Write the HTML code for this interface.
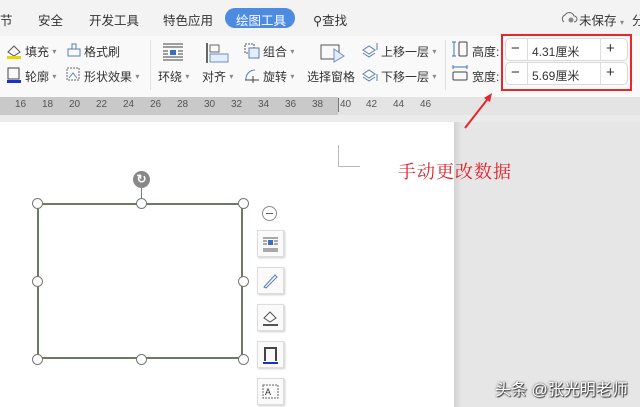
<!DOCTYPE html>
<html><head><meta charset="utf-8"><style>
*{margin:0;padding:0;box-sizing:border-box}
body{width:640px;height:407px;overflow:hidden;position:relative;background:#e6e6e6;font-family:"Liberation Sans","Noto Sans CJK SC",sans-serif;font-size:12px;color:#333}
.a{position:absolute;white-space:nowrap}
.tab{font-size:12.5px;top:10px}
.btn{font-size:12px}
.btn i{font-style:normal;font-size:8px;color:#888;vertical-align:2px}
.ic{position:absolute}
.hd{position:absolute;width:11px;height:11px;border:1px solid #777;border-radius:50%;background:#fff}
.sb{position:absolute;left:257px;width:27px;height:27px;background:#fafafa;border:1px solid #ddd;box-shadow:1px 1px 2px #ccc}
</style></head><body>
<div class="a" style="left:0;top:0;width:640px;height:36px;background:#f3f3f3"></div>
<div class="a" style="left:0;top:36px;width:640px;height:61px;background:#f9f9f9"></div>
<div class="a tab" style="left:0">节</div>
<div class="a tab" style="left:38px">安全</div>
<div class="a tab" style="left:89px">开发工具</div>
<div class="a tab" style="left:163px">特色应用</div>
<div class="a" style="left:225px;top:8px;width:70px;height:20px;border-radius:10px;background:#4d8be3"></div>
<div class="a tab" style="left:236px;color:#fff">绘图工具</div>
<div class="a tab" style="left:313px">&#9906;查找</div>
<svg class="ic" style="left:560px;top:10px" width="18" height="14"><path d="M4 12 A4 4 0 0 1 5 5 A5 5 0 0 1 14 6 A3 3 0 0 1 14 12" fill="none" stroke="#666"/><circle cx="11" cy="10" r="2.5" fill="#888"/></svg>
<div class="a tab" style="left:579px">未保存 <span style="font-size:8px;color:#888">▾</span></div>
<div class="a tab" style="left:632px">分</div>

<svg class="ic" style="left:5px;top:42px" width="18" height="18"><path d="M3 10 L9 4 L15 10 L9 14Z" fill="none" stroke="#555"/><rect x="2" y="14" width="14" height="3" fill="#e8d800"/></svg>
<div class="a btn" style="left:25px;top:43px">填充 <i>▾</i></div>
<svg class="ic" style="left:66px;top:42px" width="16" height="16"><rect x="2" y="7" width="12" height="7" fill="none" stroke="#5a7fb0"/><rect x="6" y="2" width="4" height="5" fill="none" stroke="#5a7fb0"/></svg>
<div class="a btn" style="left:84px;top:43px">格式刷</div>
<svg class="ic" style="left:5px;top:66px" width="18" height="18"><rect x="3" y="2" width="11" height="11" fill="none" stroke="#444"/><rect x="2" y="14" width="14" height="3" fill="#1a2fd0"/></svg>
<div class="a btn" style="left:25px;top:68px">轮廓 <i>▾</i></div>
<svg class="ic" style="left:65px;top:66px" width="17" height="17"><rect x="2" y="2" width="12" height="12" fill="none" stroke="#666" stroke-dasharray="2 1"/><path d="M4 12 L8 7 L12 12" stroke="#5a7fb0" fill="none"/></svg>
<div class="a btn" style="left:84px;top:68px">形状效果 <i>▾</i></div>
<div class="a" style="left:150px;top:40px;width:1px;height:50px;background:#e0e0e0"></div>
<svg class="ic" style="left:162px;top:42px" width="22" height="20"><path d="M1 2H21M1 5H21M1 15H21M1 18H21" stroke="#444"/><path d="M1 9H6M16 9H21M1 12H6M16 12H21" stroke="#444"/><rect x="8" y="8" width="6" height="5" fill="#3a6fc0"/></svg>
<div class="a btn" style="left:158px;top:68px">环绕 <i>▾</i></div>
<svg class="ic" style="left:205px;top:42px" width="24" height="22"><path d="M2 1V21" stroke="#666" stroke-width="2"/><rect x="5" y="3" width="9" height="7" fill="none" stroke="#666"/><rect x="5" y="12" width="18" height="8" fill="#e4eefa" stroke="#6a8fc8"/></svg>
<div class="a btn" style="left:202px;top:68px">对齐 <i>▾</i></div>
<svg class="ic" style="left:243px;top:42px" width="18" height="18"><rect x="2" y="2" width="9" height="9" fill="none" stroke="#555" stroke-dasharray="2 1"/><rect x="6" y="6" width="10" height="10" fill="#e4eefa" stroke="#5a7fb0"/></svg>
<div class="a btn" style="left:263px;top:43px">组合 <i>▾</i></div>
<svg class="ic" style="left:243px;top:66px" width="18" height="18"><path d="M3 14 A9 9 0 0 1 12 4" fill="none" stroke="#5a7fb0"/><path d="M2 14H16M10 10V17" stroke="#444"/></svg>
<div class="a btn" style="left:263px;top:68px">旋转 <i>▾</i></div>
<svg class="ic" style="left:320px;top:42px" width="26" height="22"><rect x="1" y="3" width="18" height="14" fill="none" stroke="#555"/><path d="M14 7 L24 14 L14 20Z" fill="#e4eefa" stroke="#6a8fc8"/></svg>
<div class="a btn" style="left:307px;top:68px">选择窗格</div>
<svg class="ic" style="left:361px;top:42px" width="18" height="17"><path d="M2 8 L8 4 L14 8 L8 12Z" fill="none" stroke="#5a7fb0"/><path d="M2 11 L8 15 L14 11" fill="none" stroke="#5a7fb0"/><path d="M16 1V8" stroke="#5a7fb0"/></svg>
<div class="a btn" style="left:381px;top:43px">上移一层 <i>▾</i></div>
<svg class="ic" style="left:361px;top:66px" width="18" height="17"><path d="M2 8 L8 4 L14 8 L8 12Z" fill="none" stroke="#5a7fb0"/><path d="M2 11 L8 15 L14 11" fill="none" stroke="#5a7fb0"/><path d="M16 8V15" stroke="#5a7fb0"/></svg>
<div class="a btn" style="left:381px;top:68px">下移一层 <i>▾</i></div>
<div class="a" style="left:445px;top:40px;width:1px;height:50px;background:#e0e0e0"></div>
<svg class="ic" style="left:451px;top:40px" width="18" height="18"><path d="M3 2V16M1 2H5M1 16H5" stroke="#3a6fc0"/><rect x="8" y="2" width="8" height="14" rx="1" fill="none" stroke="#444"/></svg>
<div class="a btn" style="left:472px;top:43px">高度:</div>
<svg class="ic" style="left:451px;top:64px" width="18" height="18"><path d="M2 3H16M2 1V5M16 1V5" stroke="#3a6fc0"/><rect x="2" y="8" width="14" height="8" rx="1" fill="none" stroke="#444"/></svg>
<div class="a btn" style="left:472px;top:68px">宽度:</div>

<div class="a" style="left:505px;top:38px;width:123px;height:23px;border:1px solid #d8d8d8;border-radius:5px;background:#fff"></div>
<div class="a" style="left:527px;top:38px;width:1px;height:23px;background:#ddd"></div>
<div class="a" style="left:600px;top:38px;width:1px;height:23px;background:#ddd"></div>
<div class="a" style="left:511px;top:40px;font-size:15px">−</div>
<div class="a" style="left:532px;top:43px">4.31厘米</div>
<div class="a" style="left:606px;top:40px;font-size:15px">+</div>
<div class="a" style="left:505px;top:62px;width:123px;height:23px;border:1px solid #d8d8d8;border-radius:5px;background:#fff"></div>
<div class="a" style="left:527px;top:62px;width:1px;height:23px;background:#ddd"></div>
<div class="a" style="left:600px;top:62px;width:1px;height:23px;background:#ddd"></div>
<div class="a" style="left:511px;top:64px;font-size:15px">−</div>
<div class="a" style="left:532px;top:67px">5.69厘米</div>
<div class="a" style="left:606px;top:64px;font-size:15px">+</div>
<div class="a" style="left:501px;top:34px;width:131px;height:57px;border:2px solid #e8262c"></div>

<div class="a" style="left:0;top:97px;width:640px;height:18px;background:#e4e4e4"></div>
<div class="a" style="left:0;top:97px;width:338px;height:18px;background:#c9c9c9"></div>
<div class="a" style="left:0;top:99px;font-size:10px;color:#555;width:640px;height:14px">
<span class="a" style="left:15px">16</span><span class="a" style="left:42px">18</span><span class="a" style="left:69px">20</span><span class="a" style="left:96px">22</span><span class="a" style="left:123px">24</span><span class="a" style="left:150px">26</span><span class="a" style="left:177px">28</span><span class="a" style="left:204px">30</span><span class="a" style="left:231px">32</span><span class="a" style="left:258px">34</span><span class="a" style="left:285px">36</span><span class="a" style="left:312px">38</span><span class="a" style="left:340px">40</span><span class="a" style="left:366px">42</span><span class="a" style="left:393px">44</span><span class="a" style="left:420px">46</span></div>
<div class="a" style="left:338px;top:98px;width:1px;height:14px;background:#777"></div>
<div class="a" style="left:0;top:115px;width:640px;height:7px;background:#ebebeb"></div>

<div class="a" style="left:0;top:122px;width:454px;height:285px;background:#fff"></div>
<div class="a" style="left:454px;top:122px;width:8px;height:285px;background:linear-gradient(to right,#d2d2d2,#e6e6e6)"></div>
<div class="a" style="left:338px;top:145px;width:22px;height:22px;border-left:1px solid #bbb;border-bottom:1px solid #bbb"></div>

<div class="a" style="left:37px;top:203px;width:206px;height:156px;border:2px solid #6b7a60"></div>
<div class="a" style="left:141px;top:186px;width:1px;height:17px;background:#777"></div>
<div class="a" style="left:133px;top:171px;width:17px;height:17px;border-radius:50%;background:#888;color:#fff;font-size:12px;line-height:17px;text-align:center;font-weight:bold">↻</div>
<div class="hd" style="left:32px;top:198px"></div><div class="hd" style="left:136px;top:198px"></div><div class="hd" style="left:238px;top:198px"></div>
<div class="hd" style="left:32px;top:276px"></div><div class="hd" style="left:238px;top:276px"></div>
<div class="hd" style="left:32px;top:354px"></div><div class="hd" style="left:136px;top:354px"></div><div class="hd" style="left:238px;top:354px"></div>
<div class="a" style="left:262px;top:206px;width:15px;height:15px;border:1px solid #888;border-radius:50%;background:#fff"></div>
<div class="a" style="left:266px;top:213px;width:7px;height:1px;background:#666"></div>
<div class="sb" style="top:230px"><svg width="25" height="25"><path d="M5 7H20M5 18H20M5 20H20M5 10H9M16 10H20M5 13H9M16 13H20" stroke="#555"/><rect x="10" y="9" width="5" height="5" fill="#3a6fc0"/></svg></div>
<div class="sb" style="top:267px"><svg width="25" height="25"><path d="M6 19 L17 7 L19 9 L8 20Z" fill="none" stroke="#5a7fb0"/></svg></div>
<div class="sb" style="top:304px"><svg width="25" height="25"><path d="M6 13 L12 7 L18 13 L12 17Z" fill="none" stroke="#555"/><path d="M5 20H20" stroke="#555" stroke-width="2"/></svg></div>
<div class="sb" style="top:341px"><svg width="25" height="25"><path d="M7 19V6H18V19" fill="none" stroke="#444" stroke-width="2"/><path d="M5 21H20" stroke="#1a2fd0" stroke-width="2"/></svg></div>
<div class="sb" style="top:378px"><svg width="25" height="25"><rect x="5" y="6" width="15" height="13" fill="none" stroke="#666" stroke-dasharray="2 1"/><text x="7" y="16" font-size="9" fill="#333" font-family="Liberation Sans">A</text></svg></div>

<svg class="ic" style="left:460px;top:90px" width="40" height="42"><path d="M5 38 L30 6" stroke="#e8262c" stroke-width="2"/><path d="M32 3 L24 8 L30 12Z" fill="#e8262c"/></svg>
<div class="a" style="left:398px;top:158px;font-size:18px;color:#e0202a;font-family:'Noto Serif CJK SC',serif;letter-spacing:1px">手动更改数据</div>
<div class="a" style="left:495px;top:376px;font-size:16px;color:#fff;text-shadow:0 0 2px #333,1px 1px 1px #333">头条 @张光明老师</div>
</body></html>
